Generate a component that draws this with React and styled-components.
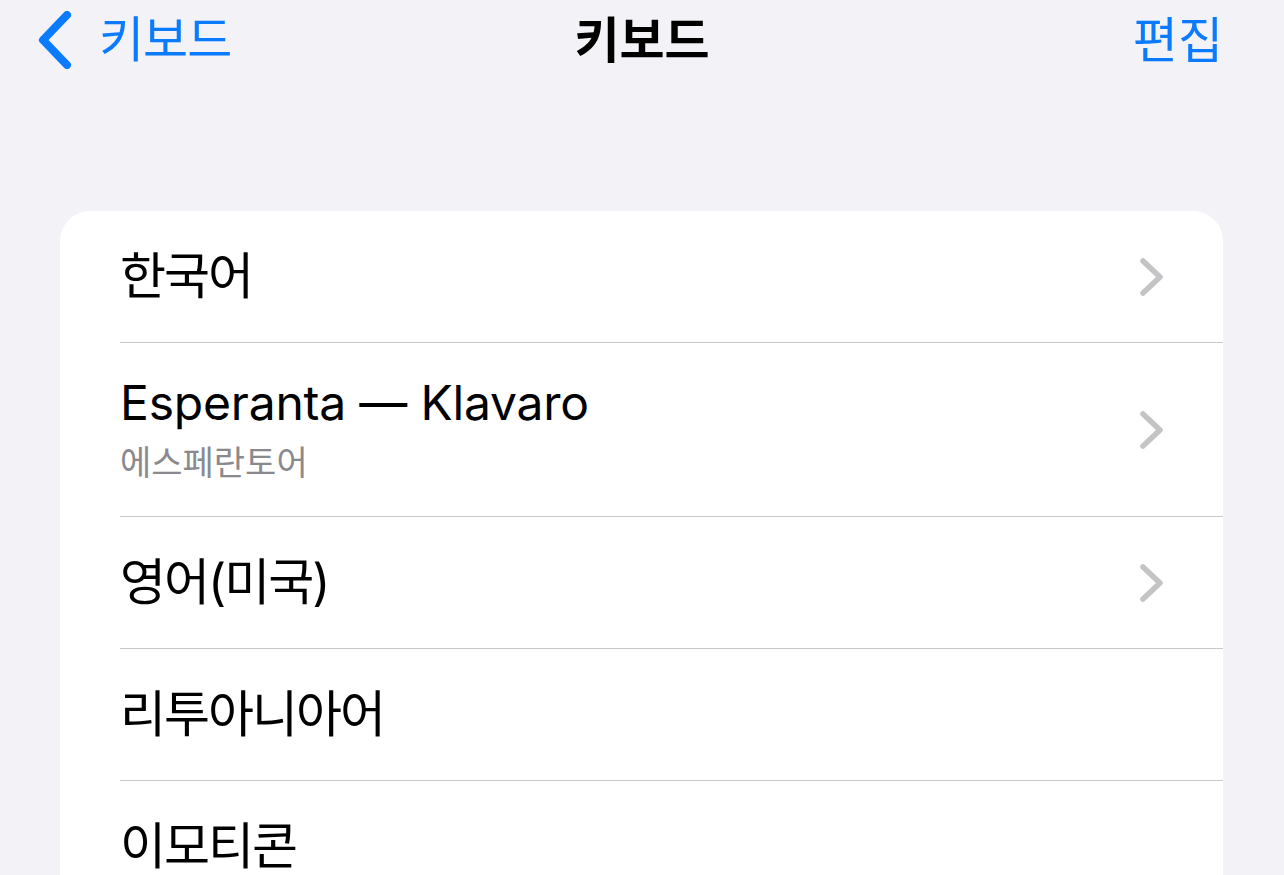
import React from 'react'
import styled, { createGlobalStyle } from 'styled-components'

const GlobalStyle = createGlobalStyle`
  html, body {
    margin: 0;
    padding: 0;
    background: #f2f2f7;
  }
  body {
    font-family: Inter, "Noto Sans CJK KR", sans-serif;
    -webkit-font-smoothing: antialiased;
  }
`

const blue = `#0a7aff`

const keyboards = [
  { title: `한국어`, more: true },
  { title: `Esperanta — Klavaro`, subtitle: `에스페란토어`, more: true },
  { title: `영어(미국)`, more: true },
  { title: `리투아니아어` },
  { title: `이모티콘` },
]

export default function App() {
  return (
    <Page>
      <GlobalStyle />
      <NavBar>
        <BackButton>
          <BackChevron />
          <NavText>키보드</NavText>
        </BackButton>
        <NavTitle>키보드</NavTitle>
        <EditButton>편집</EditButton>
      </NavBar>
      <Card>
        {keyboards.map(({ title, subtitle, more }) => (
          <Row key={title}>
            <RowBody tall={!!subtitle}>
              <Labels>
                <Title latin={/^[A-Za-z]/.test(title)}>{title}</Title>
                {subtitle && <Subtitle>{subtitle}</Subtitle>}
              </Labels>
              {more && <Disclosure />}
            </RowBody>
          </Row>
        ))}
      </Card>
    </Page>
  )
}

const BackChevron = () => (
  <svg width='36' height='58' viewBox='0 0 36 58'>
    <path
      d='M30 4 L6 29 L30 54'
      fill='none'
      stroke={blue}
      strokeWidth='8'
      strokeLinecap='round'
      strokeLinejoin='round'
    />
  </svg>
)

const Disclosure = () => (
  <svg width='26' height='40' viewBox='0 0 26 40'>
    <path
      d='M4 4 L21 20 L4 36'
      fill='none'
      stroke='#c4c4c7'
      strokeWidth='5.5'
      strokeLinecap='round'
      strokeLinejoin='round'
    />
  </svg>
)

const Page = styled.div`
  min-height: 100vh;
  background: #f2f2f7;
  overflow: hidden;
`

const NavBar = styled.header`
  display: grid;
  grid-template-columns: 1fr auto 1fr;
  align-items: center;
  height: 80px;
  padding: 0 62px;
`

const BackButton = styled.div`
  display: flex;
  align-items: center;
  gap: 26px;
  margin-left: -25px;
  margin-top: -1px;
  color: ${blue};
`

const NavText = styled.span`
  font-size: 49px;
  letter-spacing: -1px;
  line-height: 1;
`

const NavTitle = styled.h1`
  margin: 0;
  font-size: 49px;
  font-weight: 700;
  letter-spacing: 0;
  line-height: 1;
  color: #000;
`

const EditButton = styled.span`
  justify-self: end;
  margin-right: -1px;
  font-size: 49px;
  letter-spacing: 0;
  line-height: 1;
  color: ${blue};
`

const Card = styled.section`
  margin: 131px 61px 0 60px;
  background: #fff;
  border-radius: 30px 30px 0 0;
`

const Row = styled.div`
  display: flex;
  padding-left: 60px;
`

const RowBody = styled.div`
  flex: 1;
  display: flex;
  align-items: center;
  justify-content: space-between;
  min-height: ${({ tall }) => (tall ? `173px` : `131px`)};
  padding-right: 58px;
  border-bottom: 1.5px solid #c8c8cc;
`

const Labels = styled.div`
  display: flex;
  flex-direction: column;
  gap: 14px;
`

const Title = styled.div`
  font-size: ${({ latin }) => (latin ? `48px` : `50px`)};
  letter-spacing: ${({ latin }) => (latin ? `-0.2px` : `-2px`)};
  line-height: 1.1;
  color: #000;
`

const Subtitle = styled.div`
  font-size: 34px;
  letter-spacing: 0;
  line-height: 1.1;
  color: #8a8a8e;
`
